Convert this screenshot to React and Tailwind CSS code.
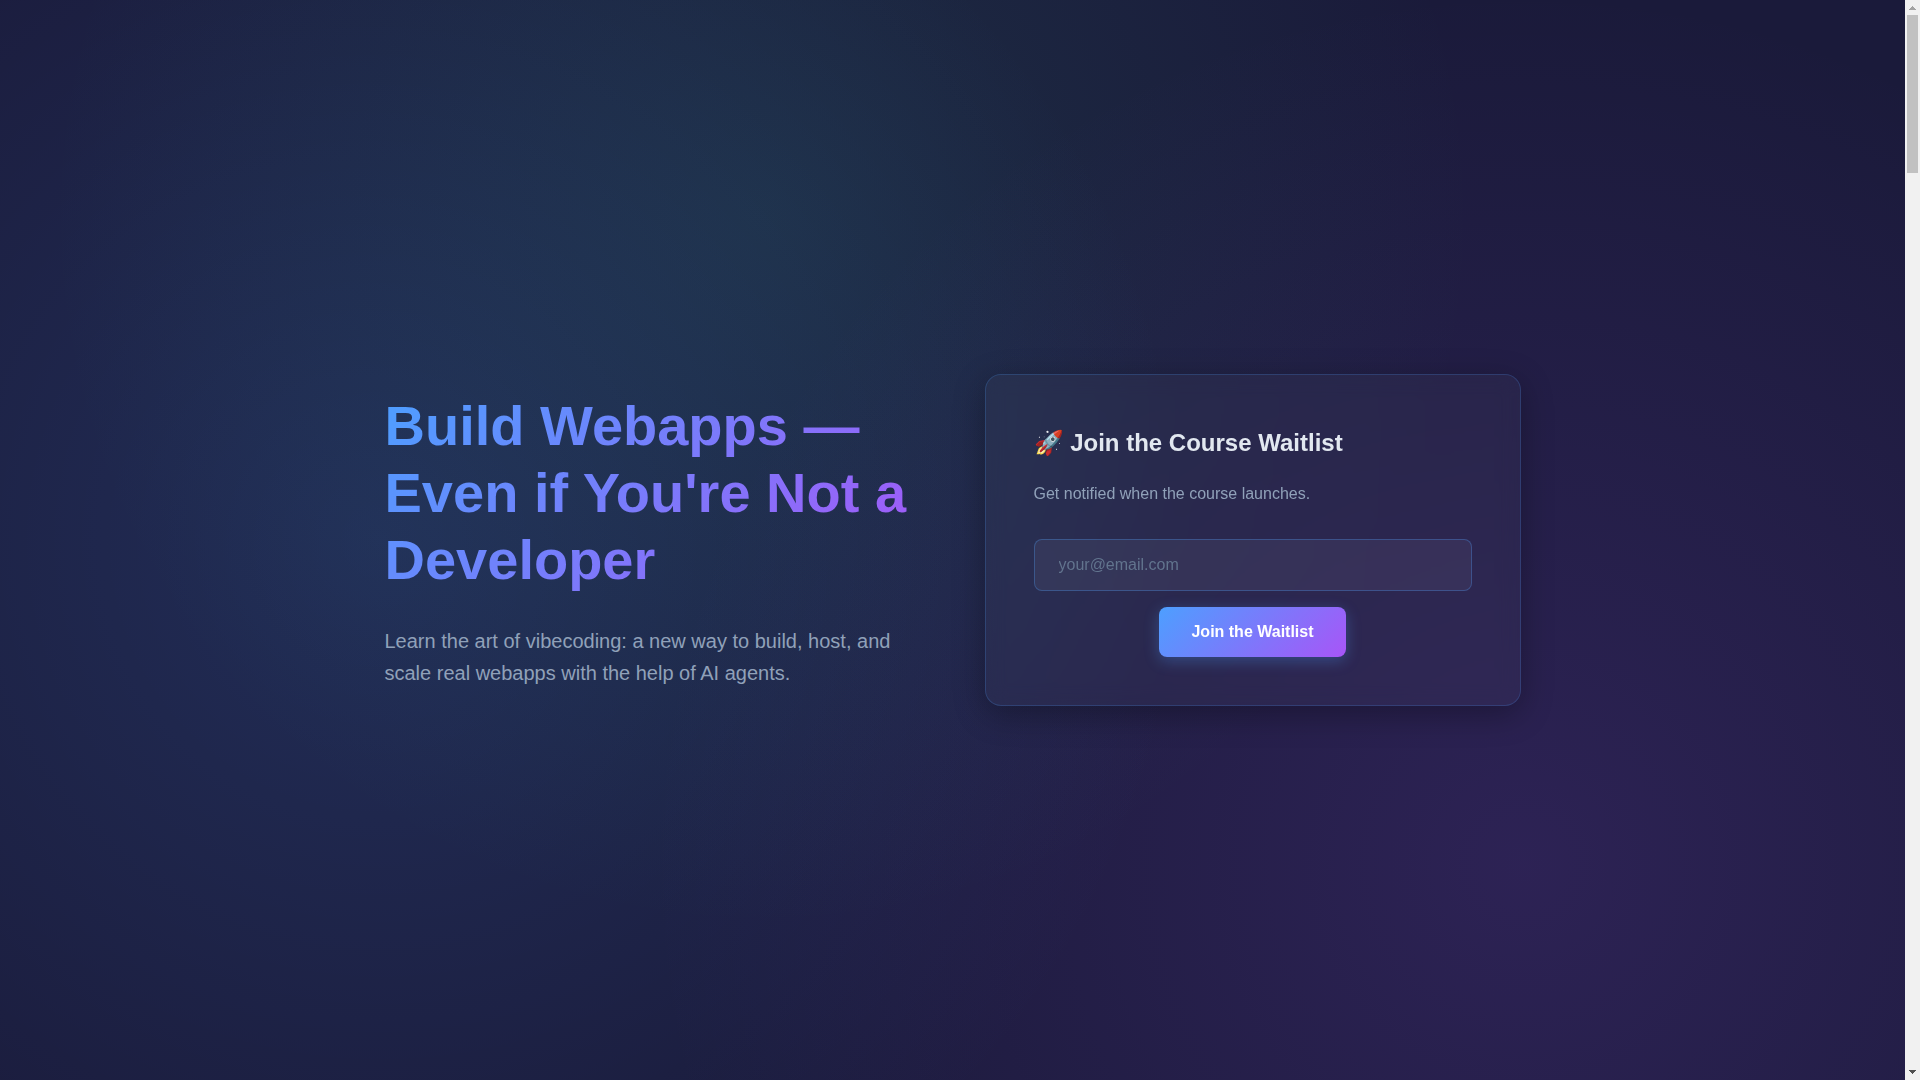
import { useState } from 'react'

function Scrollbar() {
  return (
    <aside aria-hidden="true" className="w-[15px] shrink-0 bg-[#f1f1f1] flex flex-col items-center justify-between">
      <div className="w-full flex flex-col items-center">
        <svg width="15" height="15" viewBox="0 0 15 15" fill="#a3a3a3" shapeRendering="crispEdges">
          <path d="M7 6h1v1h1v1h1v1h1v1H4V9h1V8h1V7h1z" />
        </svg>
        <div className="w-[11px] h-[158px] bg-[#c1c1c1]"></div>
      </div>
      <svg width="15" height="15" viewBox="0 0 15 15" fill="#505050" shapeRendering="crispEdges">
        <path d="M4 5h7v1h-1v1H9v1H8v1H7V8H6V7H5V6H4z" />
      </svg>
    </aside>
  )
}

function WaitlistCard() {
  const [email, setEmail] = useState('')

  return (
    <div className="rounded-2xl border border-[#4d9fff]/20 bg-white/3 p-12 backdrop-blur-[10px] shadow-[0_8px_32px_rgba(0,0,0,0.3)]">
      <h2 className="text-2xl leading-10 font-bold text-slate-200 mb-[18px]">🚀 Join the Course Waitlist</h2>
      <p className="leading-[26px] text-slate-400 mb-8">Get notified when the course launches.</p>
      <form onSubmit={(e) => e.preventDefault()} className="flex flex-col items-center gap-4">
        <input
          type="email"
          aria-label="Email address"
          placeholder="your@email.com"
          value={email}
          onChange={(e) => setEmail(e.target.value)}
          className="w-full h-[52px] px-6 rounded-lg border border-[#4d9fff]/30 bg-white/5 text-slate-200 placeholder:text-slate-500 outline-none focus:border-[#4d9fff] transition"
        />
        <button
          type="submit"
          className="h-[50px] px-8 rounded-lg bg-[linear-gradient(135deg,#4d9fff_0%,#a855f7_100%)] font-bold text-white shadow-[0_4px_15px_rgba(77,159,255,0.3)] cursor-pointer"
        >
          Join the Waitlist
        </button>
      </form>
    </div>
  )
}

function App() {
  return (
    <div className="min-h-screen flex bg-[#1a1a3a] font-['Liberation_Sans',Arial,sans-serif] text-base">
      <main className="flex-1 flex items-center justify-center bg-[radial-gradient(circle_at_20%_50%,rgba(77,159,255,0.15)_0%,transparent_50%),radial-gradient(circle_at_80%_80%,rgba(160,85,247,0.14)_0%,transparent_50%),radial-gradient(circle_at_40%_20%,rgba(52,211,153,0.1)_0%,transparent_50%)]">
        <section className="w-full max-w-[1200px] px-8 grid grid-cols-1 lg:grid-cols-2 gap-16 items-center">
          <div>
            <h1 className="text-[56px] leading-[67px] font-bold mb-8 text-transparent bg-clip-text bg-[linear-gradient(135deg,#4d9fff_0%,#a855f7_100%)]">
              Build Webapps — Even if You're Not a Developer
            </h1>
            <p className="text-xl leading-8 text-slate-400">
              Learn the art of vibecoding: a new way to build, host, and scale real webapps with the help of AI agents.
            </p>
          </div>
          <WaitlistCard />
        </section>
      </main>
      <Scrollbar />
    </div>
  )
}

export default App
